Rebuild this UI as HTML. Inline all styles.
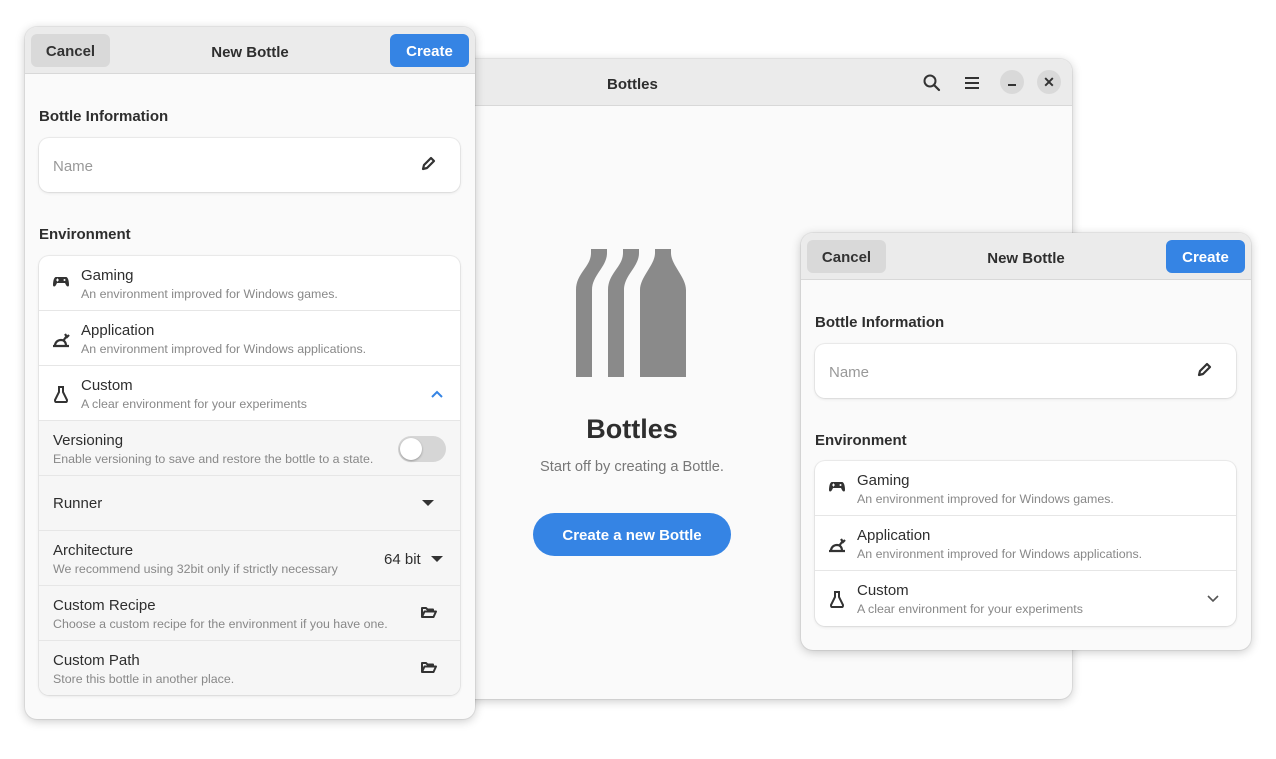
<!DOCTYPE html>
<html><head><meta charset="utf-8"><style>
*{box-sizing:border-box;margin:0;padding:0}
body{width:1276px;height:759px;background:#fff;position:relative;overflow:hidden;font-family:"Liberation Sans",sans-serif;color:#2e2e2e}
.win{position:absolute;background:#fafafa;border-radius:12px;box-shadow:0 2px 10px rgba(0,0,0,.22),0 0 0 1px rgba(0,0,0,.06);overflow:hidden}
.hb{position:absolute;left:0;top:0;right:0;height:47px;background:#ebebeb;border-bottom:1px solid #d8d8d8}
.ttl{position:absolute;top:2px;height:47px;line-height:47px;font-size:15px;font-weight:bold;left:0;right:0;text-align:center;color:#2e2e2e}
.btn{position:absolute;top:7px;height:33px;width:79px;border-radius:6px;line-height:35px;text-align:center;font-size:15px;font-weight:bold}
.cancel{left:6px;background:#d9d9d9;color:#333}
.create{right:6px;background:#3584e4;color:#fff}
.h{position:absolute;left:14px;font-size:15px;font-weight:bold}
.card{position:absolute;left:14px;width:421px;background:#fff;border-radius:10px;box-shadow:0 0 0 1px rgba(0,0,0,.05),0 1px 3px rgba(0,0,0,.1);overflow:hidden}
.row{position:relative;height:55px;border-bottom:1px solid #e6e6e6}
.row:last-child{border-bottom:none}
.row.g{background:#f6f6f6}
.t{position:absolute;top:11px;font-size:15px;color:#2e2e2e}
.s{position:absolute;top:31px;font-size:12.4px;color:#888}
.ic{position:absolute;left:13px;top:19px}
.ri{position:absolute}
</style></head><body>

<div class="win" style="left:190px;top:59px;width:882px;height:640px">
 <div class="hb"></div>
 <div class="ttl" style="left:285px;right:0;text-align:left;padding-left:132px">Bottles</div>
 <svg class="ri" style="left:732px;top:14px" width="20" height="20" viewBox="0 0 20 20"><circle cx="8" cy="8" r="5.5" fill="none" stroke="#333" stroke-width="2"/><path d="M12 12l5 5" stroke="#333" stroke-width="2.2" stroke-linecap="round"/></svg>
 <svg class="ri" style="left:773px;top:15px" width="18" height="18" viewBox="0 0 18 18"><path d="M2 4h14M2 9h14M2 14h14" stroke="#333" stroke-width="2"/></svg>
 <div class="ri" style="left:810px;top:11px;width:24px;height:24px;border-radius:50%;background:#d9d9d9"><div style="position:absolute;left:8px;top:14px;width:8px;height:2px;background:#333"></div></div>
 <div class="ri" style="left:847px;top:11px;width:24px;height:24px;border-radius:50%;background:#d9d9d9;text-align:center;line-height:24px;font-size:14px;font-weight:bold;color:#333">✕</div>
 <svg class="ri" style="left:386px;top:190px" width="110" height="128" viewBox="576 249 110 128">
  <path d="M591 249h16v4c0 14-15 22-15 37v87h-16v-87c0-17 15-23 15-37z" fill="#8a8a8a"/>
  <path d="M623 249h16v4c0 14-15 22-15 37v87h-16v-87c0-17 15-23 15-37z" fill="#8a8a8a"/>
  <path d="M655 249h16v4c0 12 15 24 15 37v87h-46v-87c0-13 15-25 15-37z" fill="#8a8a8a"/>
 </svg>
 <div class="ri" style="left:285px;top:355px;width:314px;text-align:center;font-size:27px;font-weight:bold;color:#2e2e2e">Bottles</div>
 <div class="ri" style="left:285px;top:400px;width:314px;text-align:center;font-size:14.6px;color:#777">Start off by creating a Bottle.</div>
 <div class="ri" style="left:343px;top:454px;width:198px;height:43px;border-radius:22px;background:#3584e4;color:#fff;text-align:center;line-height:45px;font-size:15px;font-weight:bold">Create a new Bottle</div>
</div>

<div class="win" style="left:25px;top:27px;width:450px;height:692px">
 <div class="hb"></div><div class="ttl">New Bottle</div>
 <div class="btn cancel">Cancel</div><div class="btn create">Create</div>
 <div class="h" style="top:81px">Bottle Information</div>
 <div class="card" style="top:111px;height:54px">
  <div style="position:absolute;left:14px;top:20px;font-size:15px;color:#999">Name</div>
  <svg class="ri" style="left:381px;top:18px" width="16" height="16" viewBox="0 0 16 16"><path d="M3 13l1-4 7-7 3 3-7 7z" fill="none" stroke="#333" stroke-width="2.2" stroke-linejoin="round"/></svg>
 </div>
 <div class="h" style="top:199px">Environment</div>
 <div class="card" style="top:229px;height:439px">
  <div class="row"><svg class="ic" width="18" height="14" viewBox="0 0 18 14"><path d="M4 2h10c2 0 3 4 3 8 0 2-2 2-3 0l-1-2H5L4 10c-1 2-3 2-3 0 0-4 1-8 3-8z" fill="#333"/><circle cx="12.5" cy="5" r="1" fill="#fff"/><path d="M4 5h3M5.5 3.5v3" stroke="#fff" stroke-width="1"/></svg><div class="t" style="left:42px">Gaming</div><div class="s" style="left:42px">An environment improved for Windows games.</div></div>
  <div class="row"><svg class="ic" width="18" height="18" viewBox="0 0 18 18"><path d="M1 16h16M3 16c0-4 3-6 6-6s5 2 5 6M11 11l3-4M13 4l2 3 2-2" fill="none" stroke="#333" stroke-width="2.2"/></svg><div class="t" style="left:42px">Application</div><div class="s" style="left:42px">An environment improved for Windows applications.</div></div>
  <div class="row"><svg class="ic" width="18" height="18" viewBox="0 0 18 18"><path d="M6 2h6M7 2v5l-4 8c0 1 0 2 1 2h10c1 0 1-1 1-2l-4-8V2" fill="none" stroke="#333" stroke-width="2"/></svg><div class="t" style="left:42px">Custom</div><div class="s" style="left:42px">A clear environment for your experiments</div>
   <svg class="ri" style="left:391px;top:23px" width="14" height="10" viewBox="0 0 14 10"><path d="M2 8l5-5 5 5" fill="none" stroke="#3584e4" stroke-width="2"/></svg></div>
  <div class="row g"><div class="t" style="left:14px">Versioning</div><div class="s" style="left:14px">Enable versioning to save and restore the bottle to a state.</div>
   <div class="ri" style="left:359px;top:15px;width:48px;height:26px;border-radius:13px;background:#d6d6d6"><div style="position:absolute;left:2px;top:2px;width:22px;height:22px;border-radius:50%;background:#fff;box-shadow:0 1px 2px rgba(0,0,0,.3)"></div></div></div>
  <div class="row g"><div class="t" style="left:14px;top:19px">Runner</div><div class="ri" style="left:383px;top:24px;border-left:6px solid transparent;border-right:6px solid transparent;border-top:6px solid #333"></div></div>
  <div class="row g"><div class="t" style="left:14px">Architecture</div><div class="s" style="left:14px">We recommend using 32bit only if strictly necessary</div><div class="t" style="left:345px;top:20px">64 bit</div><div class="ri" style="left:392px;top:25px;border-left:6px solid transparent;border-right:6px solid transparent;border-top:6px solid #333"></div></div>
  <div class="row g"><div class="t" style="left:14px">Custom Recipe</div><div class="s" style="left:14px">Choose a custom recipe for the environment if you have one.</div><svg class="ri" style="left:381px;top:19px" width="17" height="15" viewBox="0 0 17 15"><path d="M2 12V3h4l1.5 1.5H13v2M2 12l2.5-5.5H16L13.5 12z" fill="none" stroke="#333" stroke-width="2" stroke-linejoin="round"/></svg></div>
  <div class="row g"><div class="t" style="left:14px">Custom Path</div><div class="s" style="left:14px">Store this bottle in another place.</div><svg class="ri" style="left:381px;top:19px" width="17" height="15" viewBox="0 0 17 15"><path d="M2 12V3h4l1.5 1.5H13v2M2 12l2.5-5.5H16L13.5 12z" fill="none" stroke="#333" stroke-width="2" stroke-linejoin="round"/></svg></div>
 </div>
</div>

<div class="win" style="left:801px;top:233px;width:450px;height:417px">
 <div class="hb"></div><div class="ttl">New Bottle</div>
 <div class="btn cancel">Cancel</div><div class="btn create">Create</div>
 <div class="h" style="top:81px">Bottle Information</div>
 <div class="card" style="top:111px;height:54px">
  <div style="position:absolute;left:14px;top:20px;font-size:15px;color:#999">Name</div>
  <svg class="ri" style="left:381px;top:18px" width="16" height="16" viewBox="0 0 16 16"><path d="M3 13l1-4 7-7 3 3-7 7z" fill="none" stroke="#333" stroke-width="2.2" stroke-linejoin="round"/></svg>
 </div>
 <div class="h" style="top:199px">Environment</div>
 <div class="card" style="top:228px;height:165px">
  <div class="row"><svg class="ic" width="18" height="14" viewBox="0 0 18 14"><path d="M4 2h10c2 0 3 4 3 8 0 2-2 2-3 0l-1-2H5L4 10c-1 2-3 2-3 0 0-4 1-8 3-8z" fill="#333"/><circle cx="12.5" cy="5" r="1" fill="#fff"/><path d="M4 5h3M5.5 3.5v3" stroke="#fff" stroke-width="1"/></svg><div class="t" style="left:42px">Gaming</div><div class="s" style="left:42px">An environment improved for Windows games.</div></div>
  <div class="row"><svg class="ic" width="18" height="18" viewBox="0 0 18 18"><path d="M1 16h16M3 16c0-4 3-6 6-6s5 2 5 6M11 11l3-4M13 4l2 3 2-2" fill="none" stroke="#333" stroke-width="2.2"/></svg><div class="t" style="left:42px">Application</div><div class="s" style="left:42px">An environment improved for Windows applications.</div></div>
  <div class="row"><svg class="ic" width="18" height="18" viewBox="0 0 18 18"><path d="M6 2h6M7 2v5l-4 8c0 1 0 2 1 2h10c1 0 1-1 1-2l-4-8V2" fill="none" stroke="#333" stroke-width="2"/></svg><div class="t" style="left:42px">Custom</div><div class="s" style="left:42px">A clear environment for your experiments</div>
   <svg class="ri" style="left:391px;top:23px" width="14" height="10" viewBox="0 0 14 10"><path d="M2 2l5 5 5-5" fill="none" stroke="#555" stroke-width="1.6"/></svg></div>
 </div>
</div>
</body></html>
